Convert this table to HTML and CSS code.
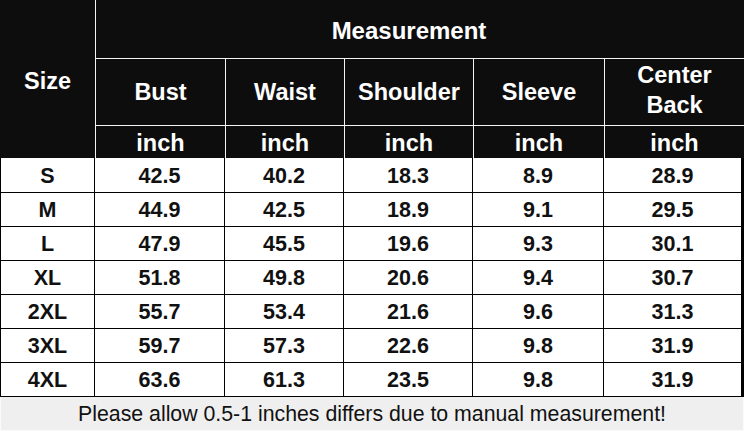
FILE: index.html
```html
<!DOCTYPE html>
<html>
<head>
<meta charset="utf-8">
<link rel="stylesheet" href="styles.css">
</head>
<body>
<div class="chart">
  <div class="head">
    <div class="hcell size">Size</div>
    <div class="hcell meas">Measurement</div>
    <div class="hcell">Bust</div>
    <div class="hcell">Waist</div>
    <div class="hcell">Shoulder</div>
    <div class="hcell">Sleeve</div>
    <div class="hcell two">Center<br>Back</div>
    <div class="hcell unit">inch</div>
    <div class="hcell unit">inch</div>
    <div class="hcell unit">inch</div>
    <div class="hcell unit">inch</div>
    <div class="hcell unit">inch</div>
  </div>
  <div class="body">
    <div class="c">S</div><div class="c">42.5</div><div class="c">40.2</div><div class="c">18.3</div><div class="c">8.9</div><div class="c">28.9</div>
    <div class="c">M</div><div class="c">44.9</div><div class="c">42.5</div><div class="c">18.9</div><div class="c">9.1</div><div class="c">29.5</div>
    <div class="c">L</div><div class="c">47.9</div><div class="c">45.5</div><div class="c">19.6</div><div class="c">9.3</div><div class="c">30.1</div>
    <div class="c">XL</div><div class="c">51.8</div><div class="c">49.8</div><div class="c">20.6</div><div class="c">9.4</div><div class="c">30.7</div>
    <div class="c">2XL</div><div class="c">55.7</div><div class="c">53.4</div><div class="c">21.6</div><div class="c">9.6</div><div class="c">31.3</div>
    <div class="c">3XL</div><div class="c">59.7</div><div class="c">57.3</div><div class="c">22.6</div><div class="c">9.8</div><div class="c">31.9</div>
    <div class="c">4XL</div><div class="c">63.6</div><div class="c">61.3</div><div class="c">23.5</div><div class="c">9.8</div><div class="c">31.9</div>
  </div>
  <div class="note">Please allow 0.5-1 inches differs due to manual measurement!</div>
</div>
</body>
</html>
```
FILE: styles.css
```css
html, body {
  margin: 0;
  padding: 0;
  background: #ffffff;
}
.chart {
  width: 744px;
  height: 431px;
  font-family: "Liberation Sans", Arial, sans-serif;
  overflow: hidden;
}
.head {
  display: grid;
  grid-template-columns: 95px 129px 118px 128px 130px 139px;
  grid-template-rows: 58px 66px 32px;
  gap: 1px;
  background: #f4f4f4;
  height: 158px;
}
.hcell {
  background: #0d0d0d;
  color: #ffffff;
  font-weight: bold;
  font-size: 23.5px;
  display: flex;
  align-items: center;
  justify-content: center;
  text-align: center;
  line-height: 30px;
}
.size {
  grid-row: 1 / 4;
  grid-column: 1;
  padding-top: 4px;
}
.meas {
  grid-row: 1;
  grid-column: 2 / 7;
  padding-top: 4px;
  padding-right: 22px;
  font-size: 24px;
}
.two {
  padding-bottom: 4px;
}
.unit {
  padding-top: 2px;
}
.body {
  display: grid;
  grid-template-columns: 93px 129px 118px 128px 130px 137px;
  grid-template-rows: 34px repeat(6, 33px);
  gap: 1px;
  padding: 0 1px 1px 1px;
  background: #000000;
}
.c {
  background: #ffffff;
  color: #111111;
  font-weight: bold;
  font-size: 21.5px;
  display: flex;
  align-items: center;
  justify-content: center;
  padding-top: 2px;
}
.note {
  background: #efefef;
  border: 1px solid #fafafa;
  border-top: none;
  box-sizing: border-box;
  height: 34px;
  color: #111111;
  font-size: 21.3px;
  display: flex;
  align-items: center;
  justify-content: center;
  padding-top: 1px;
}
```
